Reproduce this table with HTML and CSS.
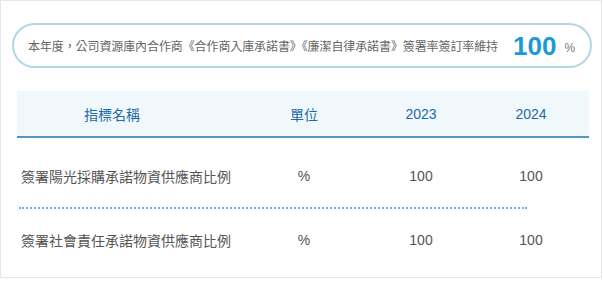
FILE: index.html
```html
<!DOCTYPE html>
<html lang="zh-Hant">
<head>
<meta charset="utf-8">
<link rel="stylesheet" href="styles.css">
</head>
<body>
<div class="card">
  <div class="pill">
    <span class="pill-text">本年度，公司資源庫內合作商《合作商入庫承諾書》《廉潔自律承諾書》簽署率簽訂率維持</span>
    <span class="big">100</span>
    <span class="unit">%</span>
  </div>
  <div class="table">
    <div class="row head">
      <div class="c1 h1">指標名稱</div>
      <div class="c2">單位</div>
      <div class="c3">2023</div>
      <div class="c4">2024</div>
    </div>
    <div class="row body r1">
      <div class="c1">簽署陽光採購承諾物資供應商比例</div>
      <div class="c2">%</div>
      <div class="c3">100</div>
      <div class="c4">100</div>
    </div>
    <div class="dots"></div>
    <div class="row body r2">
      <div class="c1">簽署社會責任承諾物資供應商比例</div>
      <div class="c2">%</div>
      <div class="c3">100</div>
      <div class="c4">100</div>
    </div>
  </div>
</div>
</body>
</html>
```
FILE: styles.css
```css
html, body {
  margin: 0;
  padding: 0;
  background: #ffffff;
}
body {
  font-family: "Liberation Sans", "Noto Sans CJK TC", sans-serif;
}
.card {
  box-sizing: border-box;
  width: 602px;
  height: 278px;
  border: 1px solid #e6e6e6;
  padding: 22px 0 0 11px;
}
.pill {
  box-sizing: border-box;
  width: 580px;
  height: 45px;
  border: 2px solid #b3d7e6;
  border-radius: 23px;
  display: flex;
  align-items: center;
  padding-left: 14px;
  color: #666666;
}
.pill-text {
  font-size: 12px;
  line-height: 16px;
  letter-spacing: -0.1px;
  padding-top: 2px;
}
.big {
  font-size: 26px;
  font-weight: bold;
  color: #1a9ad8;
  margin-left: 15px;
  line-height: 30px;
}
.unit {
  font-size: 12px;
  margin-left: 8px;
  padding-top: 4px;
  color: #777777;
}
.table {
  width: 572px;
  margin: 23px 0 0 5px;
}
.row {
  display: grid;
  grid-template-columns: 222px 130px 104px 116px;
  align-items: center;
  font-size: 14px;
}
.row > div {
  text-align: center;
}
.head {
  height: 45px;
  background: #f1f8fc;
  border-bottom: 2px solid #5595c2;
  color: #1f6aa5;
}
.head .h1 {
  padding-right: 32px;
}
.body {
  color: #555555;
}
.body .c1 {
  text-align: left;
  padding-left: 4px;
}
.r1 {
  height: 20px;
  padding: 28px 0 21px;
}
.r2 {
  height: 20px;
  padding: 21px 0 0;
}
.dots {
  width: 508px;
  margin-left: 2px;
  border-bottom: 2px dotted #72b2da;
}
```
